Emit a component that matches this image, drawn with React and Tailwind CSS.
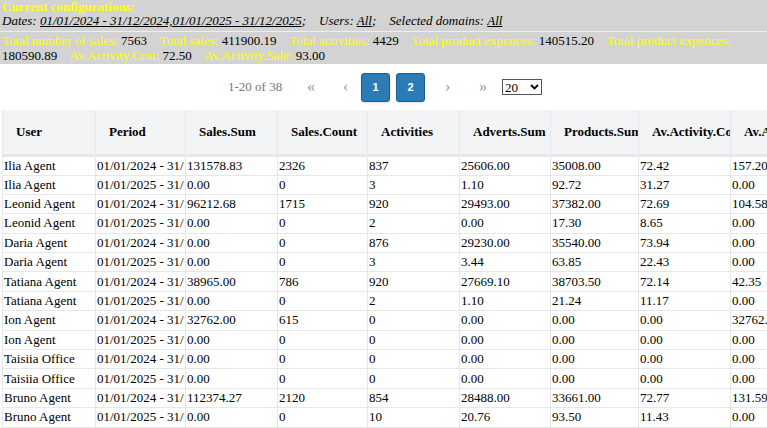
export default function App() {
  const cols = [93, 90, 92, 90, 92, 91, 88, 92, 100];
  const heads = ["User", "Period", "Sales.Sum", "Sales.Count", "Activities", "Adverts.Sum", "Products.Sum", "Av.Activity.Cost", "Av.Activity.Sale"];
  const rows = [
    ["Ilia Agent", "2024", "131578.83", "2326", "837", "25606.00", "35008.00", "72.42", "157.20"],
    ["Ilia Agent", "2025", "0.00", "0", "3", "1.10", "92.72", "31.27", "0.00"],
    ["Leonid Agent", "2024", "96212.68", "1715", "920", "29493.00", "37382.00", "72.69", "104.58"],
    ["Leonid Agent", "2025", "0.00", "0", "2", "0.00", "17.30", "8.65", "0.00"],
    ["Daria Agent", "2024", "0.00", "0", "876", "29230.00", "35540.00", "73.94", "0.00"],
    ["Daria Agent", "2025", "0.00", "0", "3", "3.44", "63.85", "22.43", "0.00"],
    ["Tatiana Agent", "2024", "38965.00", "786", "920", "27669.10", "38703.50", "72.14", "42.35"],
    ["Tatiana Agent", "2025", "0.00", "0", "2", "1.10", "21.24", "11.17", "0.00"],
    ["Ion Agent", "2024", "32762.00", "615", "0", "0.00", "0.00", "0.00", "32762.00"],
    ["Ion Agent", "2025", "0.00", "0", "0", "0.00", "0.00", "0.00", "0.00"],
    ["Taisiia Office", "2024", "0.00", "0", "0", "0.00", "0.00", "0.00", "0.00"],
    ["Taisiia Office", "2025", "0.00", "0", "0", "0.00", "0.00", "0.00", "0.00"],
    ["Bruno Agent", "2024", "112374.27", "2120", "854", "28488.00", "33661.00", "72.77", "131.59"],
    ["Bruno Agent", "2025", "0.00", "0", "10", "20.76", "93.50", "11.43", "0.00"],
    ["", "", "", "", "", "", "", "", ""],
  ];
  const Y = ({ children }) => <span className="text-[#ffff00]">{children}</span>;
  return (
    <div className="w-[767px] h-[428px] overflow-hidden bg-white text-[13px] text-black" style={{ fontFamily: '"Liberation Serif", serif' }}>
      <div className="bg-[#d3d3d3] px-[2px]">
        <div className="leading-[13px] font-bold text-[#ffff00]">Current configurations:</div>
        <div className="italic leading-[16px] pb-[2px]">
          Dates: <u>01/01/2024 - 31/12/2024,01/01/2025 - 31/12/2025</u>;&nbsp;&nbsp;&nbsp; Users: <u>All</u>;&nbsp;&nbsp;&nbsp; Selected domains: <u>All</u>
        </div>
      </div>
      <div className="h-[1px] bg-[#eeeeee]" />
      <div className="bg-[#d3d3d3] px-[2px] leading-[15px] py-[1px]">
        <Y>Total number of sales:</Y> 7563&nbsp;&nbsp;&nbsp; <Y>Total sales:</Y> 411900.19&nbsp;&nbsp;&nbsp; <Y>Total activities:</Y> 4429&nbsp;&nbsp;&nbsp; <Y>Total product expences:</Y> 140515.20&nbsp;&nbsp;&nbsp; <Y>Total product expences:</Y> 180590.89&nbsp;&nbsp;&nbsp; <Y>Av.Activity.Cost:</Y> 72.50&nbsp;&nbsp;&nbsp; <Y>Av.Activity.Sale:</Y> 93.00
      </div>
      <div className="h-[46px] flex items-center text-[#777]">
        <span className="ml-[228px] w-[79px]">1-20 of 38</span>
        <span className="w-[36px] text-[#999] text-[16px]">«</span>
        <span className="w-[18px] text-[#999] text-[16px]">‹</span>
        <div className="w-[29px] h-[29px] rounded-[3px] bg-[#2c7bb4] border border-[#1f5f8f] shadow text-white text-[11px] font-bold flex items-center justify-center" style={{ fontFamily: "Arial, sans-serif" }}>1</div>
        <div className="ml-[6px] w-[29px] h-[29px] rounded-[3px] bg-[#2c7bb4] border border-[#1f5f8f] shadow text-white text-[11px] font-bold flex items-center justify-center" style={{ fontFamily: "Arial, sans-serif" }}>2</div>
        <span className="ml-[20px] w-[34px] text-[#999] text-[16px]">›</span>
        <span className="w-[23px] text-[#999] text-[16px]">»</span>
        <div className="w-[40px] h-[16px] border border-[#555] text-black flex items-center justify-between px-[2px] leading-none">
          <span>20</span>
          <svg width="9" height="6" viewBox="0 0 9 6"><path d="M1 1l3.5 3.5L8 1" stroke="#000" strokeWidth="1.8" fill="none" /></svg>
        </div>
      </div>
      <table className="table-fixed border-collapse ml-[2px]" style={{ width: 828 }}>
        <colgroup>{cols.map((w, i) => <col key={i} style={{ width: w }} />)}</colgroup>
        <thead>
          <tr className="h-[45px] bg-[#f3f4f6]">
            {heads.map((h, i) => (
              <th key={i} className="text-left font-bold pl-[13px] whitespace-nowrap overflow-hidden border-x border-[#e5e7eb] border-b-[3px] border-b-[#e5e7eb]">{h}</th>
            ))}
          </tr>
        </thead>
        <tbody>
          {rows.map((r, i) => (
            <tr key={i} className="h-[19.4px]">
              {r.map((c, j) => (
                <td key={j} className="pl-[1px] pr-[2px] whitespace-nowrap overflow-hidden border border-[#e5e7eb] leading-[18px]">
                  {j === 1 && c ? `01/01/${c} - 31/12/${c}` : c}
                </td>
              ))}
            </tr>
          ))}
        </tbody>
      </table>
    </div>
  );
}
